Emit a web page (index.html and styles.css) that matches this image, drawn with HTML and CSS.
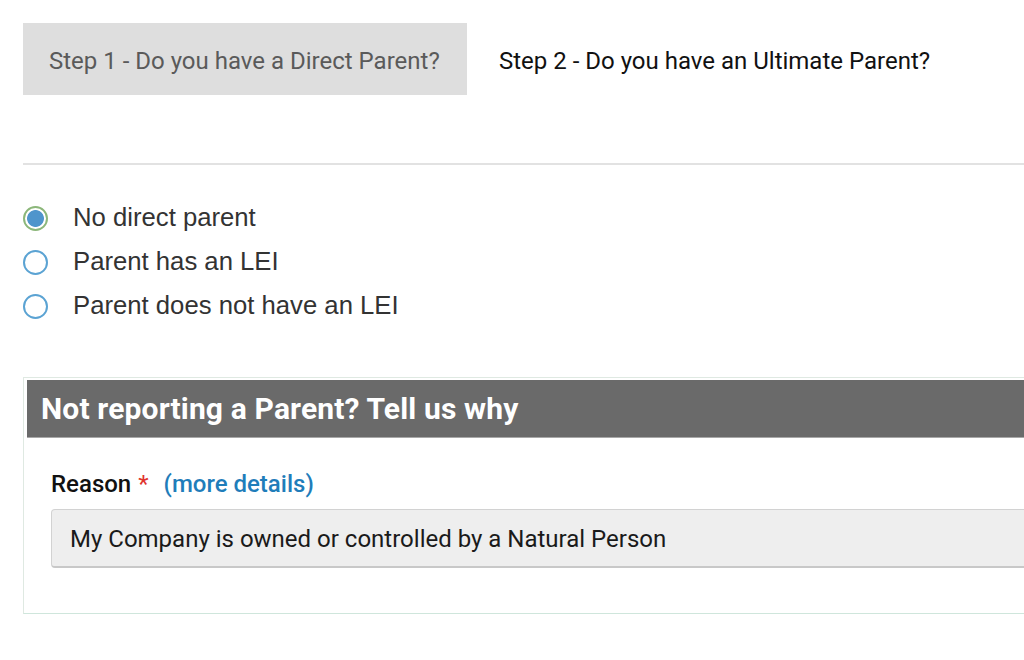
FILE: index.html
```html
<!DOCTYPE html>
<html>
<head>
<meta charset="utf-8">
<link rel="stylesheet" href="styles.css">
</head>
<body>
<div class="page">
  <div class="tabs">
    <div class="tab active">Step 1 - Do you have a Direct Parent?</div>
    <div class="tab">Step 2 - Do you have an Ultimate Parent?</div>
  </div>
  <div class="rule"></div>
  <div class="options">
    <label class="opt"><span class="radio checked"></span><span class="opt-text">No direct parent</span></label>
    <label class="opt"><span class="radio"></span><span class="opt-text">Parent has an LEI</span></label>
    <label class="opt"><span class="radio"></span><span class="opt-text">Parent does not have an LEI</span></label>
  </div>
  <div class="panel">
    <div class="panel-head">Not reporting a Parent? Tell us why</div>
    <div class="panel-body">
      <div class="field-label"><span class="lbl">Reason</span><span class="req">*</span><a class="more">(more details)</a></div>
      <div class="select">My Company is owned or controlled by a Natural Person</div>
    </div>
  </div>
</div>
</body>
</html>
```

FILE: styles.css
```css
html, body {
  margin: 0;
  padding: 0;
  background: #fff;
  overflow: hidden;
}
.page {
  width: 1140px;
  padding: 23px 0 0 23px;
  font-family: Roboto, "Liberation Sans", sans-serif;
}
.tabs {
  display: flex;
  align-items: stretch;
  height: 72px;
}
.tab {
  display: flex;
  align-items: center;
  font-size: 24px;
  color: #111;
  padding-left: 32px;
  padding-top: 3px;
  box-sizing: border-box;
}
.tab.active {
  background: #dedede;
  color: #5a5a5a;
  width: 444px;
  padding-left: 26px;
}
.rule {
  margin-top: 68px;
  height: 2px;
  background: #e2e2e2;
}
.options {
  margin-top: 41px;
  display: flex;
  flex-direction: column;
  gap: 19px;
}
.opt {
  display: flex;
  align-items: center;
  height: 25px;
  font-family: "Liberation Sans", Arial, sans-serif;
  font-size: 25.7px;
  color: #333;
}
.radio {
  width: 25px;
  height: 25px;
  box-sizing: border-box;
  border: 2px solid #5ba3d3;
  border-radius: 50%;
  margin-right: 25px;
  flex: none;
}
.radio.checked {
  border-color: #8cb77a;
  background: radial-gradient(circle, #4f95cc 0, #4f95cc 8px, #fff 8.8px);
}
.opt-text {
  position: relative;
  top: -1px;
}
.panel {
  margin-top: 58px;
  border: 1px solid #dfe9e2;
  border-bottom-color: #cfe6dc;
  padding: 2px 0 0 3px;
}
.panel-head {
  background: #6a6a6a;
  color: #fff;
  height: 58px;
  display: flex;
  align-items: center;
  padding-left: 14px;
  font-size: 30px;
  font-weight: 700;
  letter-spacing: 0.15px;
  border-bottom: 1px solid #a8a8a8;
  box-sizing: border-box;
}
.panel-body {
  padding: 32px 0 45px 24px;
}
.field-label {
  display: flex;
  align-items: baseline;
  font-size: 24px;
  height: 30px;
}
.lbl {
  font-weight: 500;
  color: #111;
}
.req {
  color: #e0332c;
  margin-left: 7px;
}
.more {
  color: #1f7dba;
  margin-left: 15px;
  font-weight: 500;
}
.select {
  margin-top: 9px;
  height: 59px;
  box-sizing: border-box;
  background: #eeeeee;
  border: 1px solid #d2d2d2;
  border-bottom: 2px solid #c8c8c8;
  border-radius: 4px 0 0 4px;
  display: flex;
  align-items: center;
  padding-left: 18px;
  padding-top: 2px;
  font-size: 24px;
  color: #1a1a1a;
}
```
